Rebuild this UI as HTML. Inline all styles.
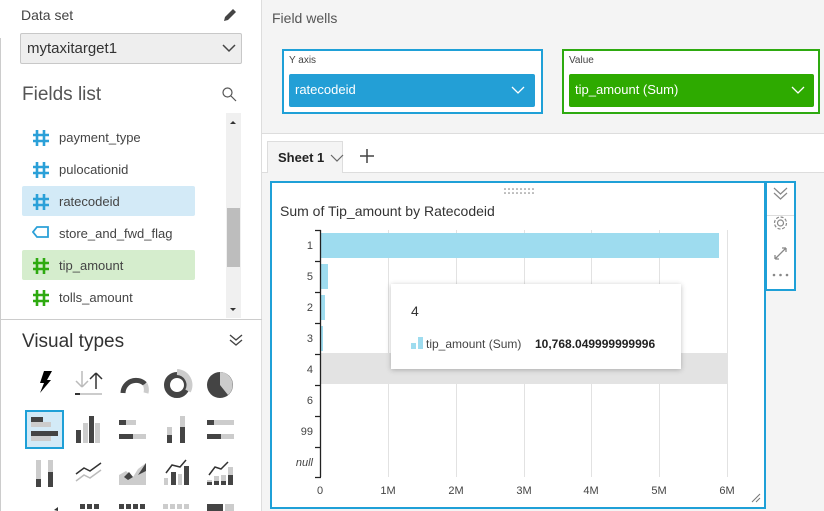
<!DOCTYPE html>
<html><head><meta charset="utf-8"><style>
*{margin:0;padding:0;box-sizing:border-box}
body{width:824px;height:511px;overflow:hidden;background:#f4f4f4;font-family:"Liberation Sans",sans-serif;position:relative;color:#333}
.a{position:absolute}
.t{position:absolute;white-space:nowrap}
</style></head><body>
<div class="a" style="left:0;top:0;width:262px;height:511px;background:#fff;border-right:1px solid #ddd"></div>
<div class="a" style="left:0;top:38px;width:1px;height:473px;background:#ccc"></div>
<div class="t" style="left:21px;top:7px;font-size:14px;color:#444">Data set</div>
<svg class="a" style="left:222px;top:7px" width="16" height="16" viewBox="0 0 16 16"><path d="M2 14 L3 10 L11 2 L14 5 L6 13 Z" fill="#444"/></svg>
<div class="a" style="left:20px;top:33px;width:222px;height:31px;background:#eee;border:1px solid #c8c8c8;border-radius:2px"></div>
<div class="t" style="left:27px;top:40px;font-size:15px;color:#333">mytaxitarget1</div>
<svg class="a" style="left:222px;top:43px" width="14" height="10"><path d="M1 2 L7 8 L13 2" stroke="#444" stroke-width="1.5" fill="none"/></svg>
<div class="t" style="left:22px;top:84px;font-size:19px;color:#555">Fields list</div>
<svg class="a" style="left:221px;top:86px" width="16" height="16"><circle cx="6.5" cy="6.5" r="4.5" stroke="#555" stroke-width="1.2" fill="none"/><path d="M10 10 L15 15" stroke="#555" stroke-width="1.2"/></svg>
<div class="a" style="left:226px;top:113px;width:15px;height:205px;background:#f0f0f0"></div>
<div class="a" style="left:227px;top:208px;width:13px;height:59px;background:#bdbdbd"></div>
<svg class="a" style="left:228px;top:118px" width="10" height="200"><path d="M2 6 L5 3 L8 6Z" fill="#333"/><path d="M2 190 L5 193 L8 190Z" fill="#333"/></svg>
<div class="a" style="left:22px;top:186px;width:173px;height:30px;background:#d3eaf7;border-radius:2px"></div>
<div class="a" style="left:22px;top:250px;width:173px;height:30px;background:#d5edcd;border-radius:2px"></div>
<div style="font-size:13px;color:#444">
<div class="t" style="left:59px;top:130px">payment_type</div>
<div class="t" style="left:59px;top:162px">pulocationid</div>
<div class="t" style="left:59px;top:194px">ratecodeid</div>
<div class="t" style="left:59px;top:226px">store_and_fwd_flag</div>
<div class="t" style="left:59px;top:258px">tip_amount</div>
<div class="t" style="left:59px;top:290px">tolls_amount</div>
</div>
<svg class="a" style="left:32px;top:128px" width="22" height="180">
<g stroke="#2ba0d8" stroke-width="2.6"><path d="M5 2 V18 M12 2 V18 M1 7 H17 M1 13 H17"/><path d="M5 34 V50 M12 34 V50 M1 39 H17 M1 45 H17"/><path d="M5 66 V82 M12 66 V82 M1 71 H17 M1 77 H17"/></g>
<path d="M5 99 H16 V109 H5 L1 104 Z" stroke="#2ba0d8" stroke-width="1.8" fill="none"/>
<g stroke="#2eaa10" stroke-width="2.6"><path d="M5 130 V146 M12 130 V146 M1 135 H17 M1 141 H17"/><path d="M5 162 V178 M12 162 V178 M1 167 H17 M1 173 H17"/></g>
</svg>
<div class="a" style="left:0;top:319px;width:262px;height:1px;background:#ccc"></div>
<div class="t" style="left:22px;top:331px;font-size:19px;color:#333">Visual types</div>
<svg class="a" style="left:228px;top:333px" width="16" height="14"><path d="M2 2 L8 7 L14 2 M2 7 L8 12 L14 7" stroke="#444" stroke-width="1.4" fill="none"/></svg>
<div class="a" style="left:25px;top:410px;width:39px;height:39px;background:#d3eaf7;border:2px solid #1fa0d7"></div>
<svg class="a" style="left:20px;top:365px" width="230" height="146" viewBox="0 0 230 146">
<path d="M24 6 H32 L27 15 H31 L20 28 L24 18 H20 Z" fill="#000"/>
<path d="M62 6 V22 M56 16 L62 22 M68 16 L62 22" stroke="#bbb" stroke-width="1.5" fill="none"/>
<path d="M76 24 V8 M70 14 L76 8 M82 14 L76 8" stroke="#333" stroke-width="1.5" fill="none"/>
<rect x="55" y="28" width="27" height="2" fill="#ccc"/><rect x="55" y="28" width="5" height="2" fill="#333"/>
<path d="M103 28 A13 13 0 0 1 125 19" stroke="#444" stroke-width="5" fill="none"/><path d="M125 19 A13 13 0 0 1 126 28" stroke="#ccc" stroke-width="5" fill="none"/>
<circle cx="157" cy="20" r="10" stroke="#444" stroke-width="6" fill="none"/><path d="M157 7 A13 13 0 0 1 168 26" stroke="#ccc" stroke-width="6" fill="none"/>
<circle cx="200" cy="20" r="13" fill="#444"/><path d="M200 20 V7 A13 13 0 0 1 208 30 Z" fill="#ccc"/>
<rect x="11" y="52" width="12" height="5" fill="#444"/><rect x="11" y="57" width="20" height="5" fill="#ccc"/><rect x="11" y="66" width="27" height="5" fill="#444"/><rect x="11" y="71" width="20" height="5" fill="#ccc"/>
<rect x="56" y="65" width="5" height="13" fill="#444"/><rect x="63" y="58" width="5" height="20" fill="#ccc"/><rect x="69" y="51" width="5" height="27" fill="#444"/><rect x="75" y="58" width="5" height="20" fill="#ccc"/>
<rect x="99" y="55" width="7" height="5" fill="#444"/><rect x="106" y="55" width="10" height="5" fill="#ccc"/><rect x="99" y="69" width="14" height="5" fill="#444"/><rect x="113" y="69" width="13" height="5" fill="#ccc"/>
<rect x="147" y="62" width="5" height="8" fill="#ccc"/><rect x="147" y="70" width="5" height="8" fill="#444"/><rect x="160" y="51" width="5" height="11" fill="#ccc"/><rect x="160" y="62" width="5" height="16" fill="#444"/>
<rect x="187" y="55" width="7" height="5" fill="#444"/><rect x="194" y="55" width="20" height="5" fill="#ccc"/><rect x="187" y="69" width="14" height="5" fill="#444"/><rect x="201" y="69" width="13" height="5" fill="#ccc"/>
<rect x="16" y="95" width="5" height="19" fill="#ccc"/><rect x="16" y="114" width="5" height="8" fill="#444"/><rect x="28" y="95" width="5" height="12" fill="#ccc"/><rect x="28" y="107" width="5" height="15" fill="#444"/>
<path d="M56 109 L64 103 L70 106 L81 98" stroke="#333" stroke-width="1.5" fill="none"/><path d="M56 116 L64 110 L70 113 L81 105" stroke="#bbb" stroke-width="1.5" fill="none"/>
<path d="M99 120 V110 L106 106 L113 112 L118 104 L126 98 V120 Z" fill="#ccc"/><path d="M104 112 L109 107 L113 112 L108 115 Z M118 110 L126 98 V106 Z" fill="#444"/>
<rect x="144" y="113" width="4" height="7" fill="#ccc"/><rect x="151" y="107" width="5" height="13" fill="#444"/><rect x="158" y="109" width="4" height="11" fill="#ccc"/><rect x="164" y="101" width="5" height="19" fill="#444"/><path d="M146 108 L152 100 L160 102 L166 95" stroke="#333" stroke-width="1.5" fill="none"/>
<rect x="187" y="115" width="5" height="5" fill="#ccc"/><rect x="187" y="117" width="5" height="3" fill="#444"/><rect x="194" y="111" width="5" height="9" fill="#ccc"/><rect x="194" y="116" width="5" height="4" fill="#444"/><rect x="201" y="110" width="5" height="10" fill="#ccc"/><rect x="201" y="116" width="5" height="4" fill="#444"/><rect x="208" y="102" width="5" height="18" fill="#ccc"/><rect x="208" y="110" width="5" height="10" fill="#444"/><path d="M189 110 L195 102 L201 104 L208 97" stroke="#333" stroke-width="1.5" fill="none"/>
<path d="M34 145 L38 142 V146Z" fill="#333"/>
<g fill="#444"><rect x="60" y="139" width="5" height="5"/><rect x="67" y="139" width="5" height="5"/><rect x="74" y="139" width="5" height="5"/><rect x="99" y="139" width="5" height="5"/><rect x="106" y="139" width="5" height="5"/><rect x="113" y="139" width="5" height="5"/><rect x="120" y="139" width="5" height="5"/><rect x="187" y="139" width="16" height="7"/></g>
<g fill="#ccc"><rect x="143" y="139" width="5" height="5"/><rect x="150" y="139" width="5" height="5"/><rect x="157" y="139" width="5" height="5"/><rect x="164" y="139" width="5" height="5"/><rect x="205" y="139" width="9" height="7"/></g>
</svg>
<div class="t" style="left:272px;top:10px;font-size:14px;color:#555">Field wells</div>
<div class="a" style="left:282px;top:49px;width:261px;height:65px;background:#fff;border:2px solid #1fa0d7"></div>
<div class="t" style="left:289px;top:55px;font-size:10px;color:#444">Y axis</div>
<div class="a" style="left:289px;top:74px;width:246px;height:33px;background:#239fd6;border-radius:2px"></div>
<div class="t" style="left:295px;top:82px;font-size:13px;color:#fff">ratecodeid</div>
<svg class="a" style="left:511px;top:85px" width="14" height="10"><path d="M1 2 L7 8 L13 2" stroke="#fff" stroke-width="1.3" fill="none"/></svg>
<div class="a" style="left:562px;top:49px;width:258px;height:65px;background:#fff;border:2px solid #2eaa10"></div>
<div class="t" style="left:569px;top:55px;font-size:10px;color:#444">Value</div>
<div class="a" style="left:569px;top:74px;width:245px;height:33px;background:#2eaa00;border-radius:2px"></div>
<div class="t" style="left:575px;top:82px;font-size:13px;color:#fff">tip_amount (Sum)</div>
<svg class="a" style="left:791px;top:85px" width="14" height="10"><path d="M1 2 L7 8 L13 2" stroke="#fff" stroke-width="1.3" fill="none"/></svg>
<div class="a" style="left:262px;top:133px;width:562px;height:40px;background:#fff;border-top:1px solid #ddd;border-bottom:1px solid #ddd"></div>
<div class="a" style="left:267px;top:141px;width:76px;height:32px;background:#f4f4f4;border:1px solid #ddd;border-bottom:none"></div>
<div class="t" style="left:278px;top:150px;font-size:13px;font-weight:bold;color:#222">Sheet 1</div>
<svg class="a" style="left:330px;top:153px" width="14" height="10"><path d="M1 2 L7 8 L13 2" stroke="#666" stroke-width="1.2" fill="none"/></svg>
<svg class="a" style="left:359px;top:148px" width="16" height="16"><path d="M8 1 V15 M1 8 H15" stroke="#444" stroke-width="1.5"/></svg>
<div class="a" style="left:270px;top:181px;width:496px;height:328px;background:#fff;border:2px solid #1fa0d7"></div>
<div class="a" style="left:765px;top:181px;width:31px;height:110px;background:#fff;border:2px solid #1fa0d7"></div>
<div class="a" style="left:767px;top:215px;width:27px;height:1px;background:#ddd"></div>
<svg class="a" style="left:767px;top:183px" width="27" height="106">
<path d="M7 5 L13.5 11 L20 5 M7 10 L13.5 16 L20 10" stroke="#888" stroke-width="1.2" fill="none"/>
<circle cx="13.5" cy="40" r="3" stroke="#888" stroke-width="1.2" fill="none"/><circle cx="13.5" cy="40" r="6" stroke="#888" stroke-width="1.2" fill="none" stroke-dasharray="3 1.7"/>
<path d="M8 76 L19 65 M8 76 V72 M8 76 H12 M19 65 H15 M19 65 V69" stroke="#888" stroke-width="1.3" fill="none"/>
<g fill="#888"><circle cx="7" cy="92" r="1.3"/><circle cx="13.5" cy="92" r="1.3"/><circle cx="20" cy="92" r="1.3"/></g>
</svg>
<svg class="a" style="left:503px;top:187px" width="32" height="8"><g fill="#777"><circle cx="2" cy="2" r=".8"/><circle cx="6" cy="2" r=".8"/><circle cx="10" cy="2" r=".8"/><circle cx="14" cy="2" r=".8"/><circle cx="18" cy="2" r=".8"/><circle cx="22" cy="2" r=".8"/><circle cx="26" cy="2" r=".8"/><circle cx="30" cy="2" r=".8"/><circle cx="2" cy="6" r=".8"/><circle cx="6" cy="6" r=".8"/><circle cx="10" cy="6" r=".8"/><circle cx="14" cy="6" r=".8"/><circle cx="18" cy="6" r=".8"/><circle cx="22" cy="6" r=".8"/><circle cx="26" cy="6" r=".8"/><circle cx="30" cy="6" r=".8"/></g></svg>
<div class="t" style="left:280px;top:203px;font-size:14px;color:#333">Sum of Tip_amount by Ratecodeid</div>
<svg class="a" style="left:270px;top:181px" width="496" height="328">
<g stroke="#e2e2e2" stroke-width="1"><path d="M118.5 49 V296 M186.5 49 V296 M254.5 49 V296 M321.5 49 V296 M389.5 49 V296 M457.5 49 V296"/></g>
<rect x="50" y="172" width="408" height="31" fill="#e3e3e3"/>
<rect x="51" y="52" width="398" height="25" fill="#9edcef"/>
<rect x="51" y="83" width="7" height="25" fill="#9edcef"/>
<rect x="51" y="114" width="4" height="25" fill="#9edcef"/>
<rect x="51" y="145" width="2" height="25" fill="#9edcef"/>
<path d="M50.5 49 V296" stroke="#222" stroke-width="1.3"/>
<path d="M45 49.5 H51 M45 80.5 H51 M45 111.5 H51 M45 142.5 H51 M45 173.5 H51 M45 204.5 H51 M45 235.5 H51 M45 266.5 H51 M45 296.5 H51" stroke="#222" stroke-width="1.3"/>
<g font-size="11" fill="#444" text-anchor="end" font-family="Liberation Sans, sans-serif">
<text x="43" y="68">1</text><text x="43" y="99">5</text><text x="43" y="130">2</text><text x="43" y="161">3</text><text x="43" y="192">4</text><text x="43" y="223">6</text><text x="43" y="254">99</text><text x="43" y="285" font-style="italic">null</text></g>
<g font-size="11" fill="#444" text-anchor="middle" font-family="Liberation Sans, sans-serif">
<text x="50" y="313">0</text><text x="118" y="313">1M</text><text x="186" y="313">2M</text><text x="254" y="313">3M</text><text x="321" y="313">4M</text><text x="389" y="313">5M</text><text x="457" y="313">6M</text></g>
<path d="M482 321 L490 313 M486 321 L490 317" stroke="#777" stroke-width="1"/>
</svg>
<div class="a" style="left:391px;top:284px;width:290px;height:85px;background:#fff;box-shadow:0 1px 5px rgba(0,0,0,.25)"></div>
<div class="t" style="left:411px;top:303px;font-size:14px;color:#333">4</div>
<div class="a" style="left:411px;top:343px;width:5px;height:6px;background:#9edcef"></div>
<div class="a" style="left:418px;top:337px;width:5px;height:12px;background:#9edcef"></div>
<div class="t" style="left:426px;top:337px;font-size:12px;color:#444">tip_amount (Sum)</div>
<div class="t" style="left:535px;top:337px;font-size:12px;font-weight:bold;color:#222">10,768.049999999996</div>
</body></html>
